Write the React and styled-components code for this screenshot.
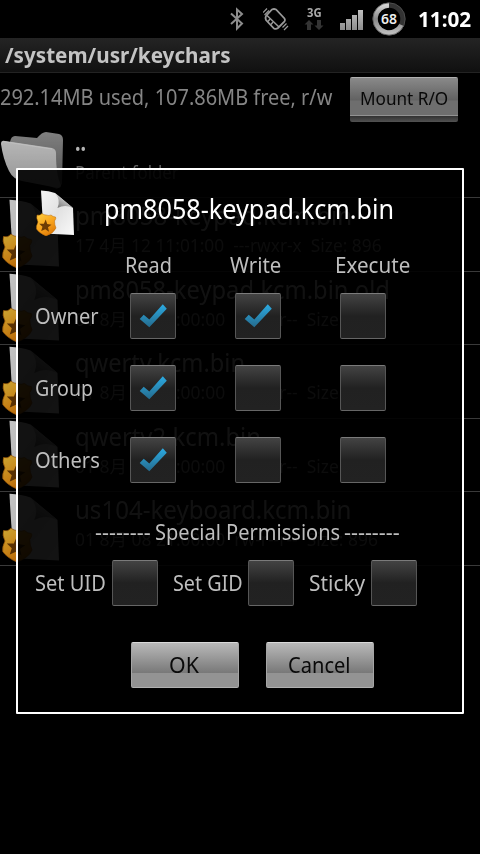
import React, { useLayoutEffect, useRef, useState } from 'react';
import styled, { createGlobalStyle } from 'styled-components';

const GlobalStyle = createGlobalStyle`
  * { box-sizing: border-box; }
  body {
    margin: 0;
    background: #000;
    overflow: hidden;
  }
  body, button {
    font-family: 'Noto Sans', 'Noto Sans CJK JP', sans-serif;
  }
`;

const Screen = styled.div`
  width: 480px;
  height: 854px;
  background: #000;
  position: relative;
  overflow: hidden;
`;

// Text squeezed to a given width
const FitBox = styled.span`
  display: inline-block;
  vertical-align: top;
  flex: none;
  width: ${p => p.$w}px;
  height: ${p => p.$line}px;
  line-height: ${p => p.$line}px;
  font-size: ${p => p.$size}px;
  font-weight: ${p => p.$bold ? 700 : 400};
  color: ${p => p.$color};
  white-space: pre;
  text-align: left;
`;

const FitInner = styled.span`
  display: inline-block;
  transform-origin: 0 50%;
`;

const Fit = ({ w, size = 22, line = 30, color = '#bebebe', bold, children }) => {
  const ref = useRef(null);
  const [scale, setScale] = useState(1);
  useLayoutEffect(() => {
    setScale(w / ref.current.offsetWidth);
  }, [w, children]);
  return (
    <FitBox $w={w} $size={size} $line={line} $color={color} $bold={bold}>
      <FitInner ref={ref} style={{ transform: `scaleX(${scale})` }}>{children}</FitInner>
    </FitBox>
  );
};

// Status bar
const StatusBar = styled.header`
  height: 38px;
  background: #000;
  display: flex;
  align-items: center;
  padding-left: 229px;
`;

const StatusIcon = styled.svg`
  flex: none;
  display: block;
  margin-right: ${p => p.$gap}px;
`;

const Network = styled.div`
  width: 20px;
  height: 38px;
  padding-top: 6px;
  margin-right: 16px;
  display: flex;
  flex-direction: column;
  align-items: center;
`;

// Title and storage info
const TitleBar = styled.div`
  height: 35px;
  padding-left: 5px;
  background: linear-gradient(#242424, #101010);
  border-bottom: 1px solid #232323;
`;

const InfoRow = styled.div`
  height: 51px;
  display: flex;
  align-items: flex-start;
`;

const InfoText = styled.div`
  width: 350px;
  padding-top: 8px;
`;

const MountButton = styled.button`
  width: 108px;
  height: 45px;
  margin-top: 4px;
  padding: 0 0 4px 10px;
  border: 0;
  border-radius: 2px;
  text-align: left;
  background:
    linear-gradient(#b0b0b0, #b0b0b0) 0 0 / 100% 1px no-repeat,
    linear-gradient(#929292, #929292) 0 38px / 100% 1px no-repeat,
    linear-gradient(#313131, #525252) 0 39px / 100% 6px no-repeat,
    linear-gradient(#8b8b8b 0, #626262 23px, #6e6e6e 24px, #6e6e6e 100%);
`;

// File list
const Row = styled.div`
  height: ${p => p.$h}px;
  border-bottom: 1px solid #3a3a3a;
  display: flex;
`;

const RowIcon = styled.div`
  width: 75px;
  padding: ${p => p.$folder ? '7px 0 0 0' : '1px 0 0 2px'};
  filter: brightness(0.8);
`;

const RowText = styled.div`
  display: flex;
  flex-direction: column;
`;

// Dialog
const Dialog = styled.div`
  position: absolute;
  left: 16px;
  top: 168px;
  width: 448px;
  height: 546px;
  border: 2px solid #fff;
  border-radius: 1px;
  background: rgba(0, 0, 0, 0.905);
`;

const DialogHeader = styled.div`
  height: 79px;
  padding: 20px 0 0 18px;
  display: flex;
  align-items: flex-start;
  gap: 30px;
`;

const PermissionGrid = styled.div`
  padding-left: 17px;
  display: grid;
  grid-template-columns: 95px 105px 105px 105px;
  grid-template-rows: 31px 72px 72px 72px;
  align-items: center;
`;

const ColumnHead = styled.div`
  margin-left: -5px;
  height: 32px;
`;

const RowLabel = styled.div`
  height: 32px;
`;

const Box = styled.div`
  width: 46px;
  height: 46px;
  flex: none;
  border: 1px solid #565656;
  border-top-color: #7b7b7b;
  border-bottom-color: #666;
  border-radius: 2px;
  background: linear-gradient(#434343 0, #212121 22px, #222 100%);
`;

const SpecialTitle = styled.div`
  margin-top: 15px;
  height: 40px;
  padding: 5px 0 0 77px;
  display: flex;
  gap: 4px;
`;

const SpecialRow = styled.div`
  height: 64px;
  padding-left: 17px;
  display: flex;
  align-items: center;
`;

const SpecialItem = styled.div`
  width: ${p => p.$w}px;
  display: flex;
  align-items: center;
  justify-content: space-between;
  margin-right: 15px;
`;

const Actions = styled.div`
  margin-top: 27px;
  padding-left: 113px;
  display: flex;
  gap: 27px;
`;

const ActionButton = styled.button`
  width: 108px;
  height: 46px;
  padding: 0 2px 2px 0;
  border: 1px solid #a5a5a5;
  border-top-color: #d9d9d9;
  border-bottom-color: #b0b0b0;
  border-radius: 2px;
  display: flex;
  align-items: center;
  justify-content: center;
  background: linear-gradient(#b9b9b9 0, #787878 30px, #939393 30px, #939393 100%);
`;

const Folder = () => (
  <svg width="66" height="60" viewBox="0 0 66 60">
    <defs>
      <linearGradient id="fback" x1="0" y1="0" x2="0" y2="1">
        <stop offset="0" stopColor="#a0a0a0" />
        <stop offset="1" stopColor="#606060" />
      </linearGradient>
      <linearGradient id="ffront" x1="0" y1="0" x2="0" y2="1">
        <stop offset="0" stopColor="#e4e4e4" />
        <stop offset="1" stopColor="#b8b8b8" />
      </linearGradient>
    </defs>
    <path d="M10 11 Q11 5 15 5 L37 7 Q42 1 46 1 L59 3 Q63 4 63 9 L62 53 L57 58 L10 40 Z" fill="url(#fback)" />
    <path d="M1 13 Q1 9 5 10 L52 17 Q56 18 56 22 Q56 45 61 54 Q61 57 58 57 L22 50 Q13 48 9 40 Q3 28 1 13 Z" fill="url(#ffront)" />
    <path d="M2 12 Q3 10 6 11 L52 18" fill="none" stroke="#eee" strokeWidth="1" />
  </svg>
);

const FileIcon = ({ width, height, id }) => (
  <svg width={width} height={height} viewBox="0 0 38 46">
    <defs>
      <linearGradient id={`${id}p`} x1="0" y1="0" x2="1" y2="1">
        <stop offset="0" stopColor="#f4f4f4" />
        <stop offset="0.5" stopColor="#e2e2e2" />
        <stop offset="1" stopColor="#fafafa" />
      </linearGradient>
      <linearGradient id={`${id}f`} x1="0" y1="1" x2="0.6" y2="0.2">
        <stop offset="0" stopColor="#707070" />
        <stop offset="1" stopColor="#d8d8d8" />
      </linearGradient>
      <linearGradient id={`${id}s`} x1="0" y1="0" x2="0.6" y2="1">
        <stop offset="0" stopColor="#ffd040" />
        <stop offset="0.6" stopColor="#f8a21c" />
        <stop offset="1" stopColor="#e07c08" />
      </linearGradient>
    </defs>
    <path d="M5 0.5 Q13 0.8 19 3 L37 18 L38 45 L8 43.5 Q6 22 5 0.5 Z" fill={`url(#${id}p)`} />
    <path d="M19 3 Q25 10 21.5 18 Q29 14 37 18 Z" fill={`url(#${id}f)`} />
    <path d="M1 25 Q4 26 6 23.5 Q8 25 10 25 Q13 26 15 25 Q17 27 19.5 27 Q20.5 28 18.5 31 Q18.5 35 20 38 Q18 43 10 46 Q3 43 0.5 39 Q0 36 2 32 Q0 28 1 25 Z" fill={`url(#${id}s)`} stroke="#b96a08" strokeWidth=".5" />
    <path d="M9.7 29.5 L11.2 34 L15.5 34.8 L12 37.3 L13 41.7 L9.3 39.2 L5.2 41 L6.5 36.8 L3.2 33.7 L7.9 33.7 Z" fill="#6e3c04" />
  </svg>
);

const CheckBox = ({ checked }) => (
  <Box>
    {checked && (
      <svg width="44" height="44" viewBox="0 0 44 44">
        <defs>
          <linearGradient id="tick" x1="0" y1="0" x2="0" y2="1">
            <stop offset="0" stopColor="#2cabe2" />
            <stop offset="1" stopColor="#256a8c" />
          </linearGradient>
        </defs>
        <path d="M8.700 25 L12.700 20.800 L18.300 25.500 L31.800 10.300 L35.800 14.700 L18.300 33.300 Z" fill="url(#tick)" />
      </svg>
    )}
  </Box>
);

const files = [
  { name: 'pm8058-keypad.kcm.bin', w: 277, h: 74, meta: '17 4月 12 11:01:00  ---rwxr-x  Size: 896', mw: 307 },
  { name: 'pm8058-keypad.kcm.bin.old', w: 315, h: 73, meta: '01 8月 08 21:00:00  rw-r--r--  Size: 896', mw: 303 },
  { name: 'qwerty.kcm.bin', w: 170, h: 74, meta: '01 8月 08 21:00:00  rw-r--r--  Size: 896', mw: 303 },
  { name: 'qwerty2.kcm.bin', w: 186, h: 73, meta: '01 8月 08 21:00:00  rw-r--r--  Size: 896', mw: 303 },
  { name: 'us104-keyboard.kcm.bin', w: 276, h: 74, meta: '01 8月 08 21:00:00  rw-r--r--  Size: 896', mw: 303 },
];

const permissions = [
  { label: 'Owner', w: 64, values: [true, true, false] },
  { label: 'Group', w: 58, values: [true, false, false] },
  { label: 'Others', w: 65, values: [true, false, false] },
];

const Status = () => (
  <StatusBar>
    <StatusIcon $gap={18} width="16" height="24" viewBox="0 0 16 24">
      <path d="M2 6.5 L13 16.5 L8 21.5 V2.5 L13 7 L2 17" fill="none" stroke="#8c8c8c" strokeWidth="2" />
    </StatusIcon>
    <StatusIcon $gap={15} width="26" height="24" viewBox="0 0 26 24">
      <g fill="none" stroke="#999" strokeWidth="1.8">
        <path d="M9 2.500 Q11 1.500 13 2.500 L21.500 11.500 Q22.500 13 21.500 14.500 L15 21 Q13 22.500 11 21.500 L3 13 Q2 11 3 9 Z" />
        <path d="M4 8.500 L16 20" strokeWidth="1.5" />
        <path d="M5 14.500 L7 12 M8 17.500 L10 15" strokeWidth="1.4" />
        <path d="M0 5.500 L4 1.500 M1.500 8 L6 3.500 M19.500 20.500 L23.500 16.500 M21 23 L25 19" strokeWidth="1.2" />
      </g>
    </StatusIcon>
    <Network>
      <Fit w={15} size={12} line={14} color="#a8a8a8" bold>3G</Fit>
      <svg width="20" height="10" viewBox="0 0 20 10">
        <path d="M5 0 L9.500 4.500 H7 V10 H3 V4.500 H.5 Z M15 10 L19.500 5.500 H17 V0 H13 V5.500 H10.500 Z" fill="#343434" />
      </svg>
    </Network>
    <StatusIcon $gap={8} width="24" height="22" viewBox="0 0 24 22">
      <defs>
        <linearGradient id="bars" x1="0" y1="0" x2="0" y2="22" gradientUnits="userSpaceOnUse">
          <stop offset="0" stopColor="#c4c4c4" />
          <stop offset="1" stopColor="#8c8c8c" />
        </linearGradient>
      </defs>
      <path d="M0 15 H5 V22 H0 Z M6 11 H11 V22 H6 Z M12 7 H17 V22 H12 Z M18 2 H23 V22 H18 Z" fill="url(#bars)" />
    </StatusIcon>
    <StatusIcon $gap={12} width="34" height="34" viewBox="0 0 34 34">
      <defs>
        <linearGradient id="ring" x1="0" y1="0" x2="0" y2="1">
          <stop offset="0" stopColor="#d2d2d2" />
          <stop offset=".5" stopColor="#888" />
          <stop offset="1" stopColor="#bcbcbc" />
        </linearGradient>
      </defs>
      <circle cx="17" cy="17" r="13.8" fill="none" stroke="#333" strokeWidth="5" />
      <path d="M29.500 23 A13.800 13.800 0 1 1 17 3.200" fill="none" stroke="url(#ring)" strokeWidth="5" />
      <circle cx="17" cy="17" r="16.200" fill="none" stroke="#555" strokeWidth=".8" />
      <text x="17" y="22" textAnchor="middle" fontSize="14" fontWeight="600" textLength="16" lengthAdjust="spacingAndGlyphs" fill="#eee">68</text>
    </StatusIcon>
    <Fit w={53} size={21.5} line={34} color="#fff" bold>11:02</Fit>
  </StatusBar>
);

const FileList = () => (
  <main>
    <Row $h={74}>
      <RowIcon $folder><Folder /></RowIcon>
      <RowText>
        <Fit w={11} size={25} line={34} color="#b4b4b4" bold>..</Fit>
        <Fit w={104} size={17.5} line={29} color="#626262">Parent folder</Fit>
      </RowText>
    </Row>
    {files.map((file, i) => (
      <Row key={file.name} $h={file.h}>
        <RowIcon><FileIcon id={`f${i}`} width={57} height={69} /></RowIcon>
        <RowText>
          <Fit w={file.w} size={24.5} line={35} color="#b8b8b8">{file.name}</Fit>
          <Fit w={file.mw} size={17.5} line={25} color="#7c7c7c">{file.meta}</Fit>
        </RowText>
      </Row>
    ))}
  </main>
);

const PermissionDialog = () => (
  <Dialog>
    <DialogHeader>
      <FileIcon id="head" width={38} height={46} />
      <Fit w={290} size={26.5} line={38} color="#fff">pm8058-keypad.kcm.bin</Fit>
    </DialogHeader>
    <PermissionGrid>
      <span />
      <ColumnHead><Fit w={47}>Read</Fit></ColumnHead>
      <ColumnHead><Fit w={51}>Write</Fit></ColumnHead>
      <ColumnHead><Fit w={75}>Execute</Fit></ColumnHead>
      {permissions.map(row => (
        <React.Fragment key={row.label}>
          <RowLabel><Fit w={row.w}>{row.label}</Fit></RowLabel>
          {row.values.map((value, i) => <CheckBox key={i} checked={value} />)}
        </React.Fragment>
      ))}
    </PermissionGrid>
    <SpecialTitle>
      <Fit w={56}>--------</Fit>
      <Fit w={185}>Special Permissions</Fit>
      <Fit w={56}>--------</Fit>
    </SpecialTitle>
    <SpecialRow>
      <SpecialItem $w={123}><RowLabel><Fit w={71}>Set UID</Fit></RowLabel><CheckBox /></SpecialItem>
      <SpecialItem $w={121}><RowLabel><Fit w={70}>Set GID</Fit></RowLabel><CheckBox /></SpecialItem>
      <SpecialItem $w={108}><RowLabel><Fit w={56}>Sticky</Fit></RowLabel><CheckBox /></SpecialItem>
    </SpecialRow>
    <Actions>
      <ActionButton><Fit w={30} color="#0a0a0a">OK</Fit></ActionButton>
      <ActionButton><Fit w={63} color="#0a0a0a">Cancel</Fit></ActionButton>
    </Actions>
  </Dialog>
);

const App = () => {
  return (
    <>
      <GlobalStyle />
      <Screen>
        <Status />
        <TitleBar>
          <Fit w={226} size={21.5} line={33} color="#c4c4c4" bold>/system/usr/keychars</Fit>
        </TitleBar>
        <InfoRow>
          <InfoText><Fit w={332} color="#858585">292.14MB used, 107.86MB free, r/w</Fit></InfoText>
          <MountButton><Fit w={88} size={18.5} color="#080808">Mount R/O</Fit></MountButton>
        </InfoRow>
        <FileList />
        <PermissionDialog />
      </Screen>
    </>
  );
};

export default App;
